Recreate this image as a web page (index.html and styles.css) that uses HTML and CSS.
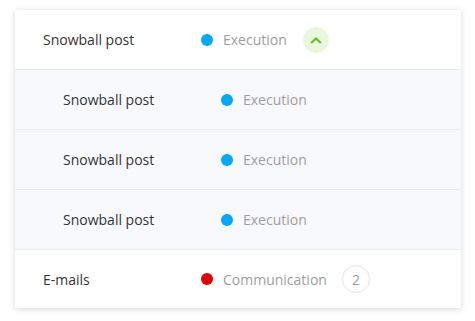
FILE: index.html
```html
<!DOCTYPE html>
<html>
<head>
<meta charset="utf-8">
<link rel="stylesheet" href="styles.css">
</head>
<body>
<div class="card">
  <div class="row">
    <span class="name">Snowball post</span>
    <span class="status"><span class="dot blue"></span><span class="label">Execution</span></span>
    <span class="toggle"><svg width="12" height="8" viewBox="0 0 12 8"><path d="M2 6.2 L6 2.4 L10 6.2" fill="none" stroke="#5cc61c" stroke-width="2.2" stroke-linecap="square"/></svg></span>
  </div>
  <div class="row child">
    <span class="name">Snowball post</span>
    <span class="status"><span class="dot blue"></span><span class="label">Execution</span></span>
  </div>
  <div class="row child">
    <span class="name">Snowball post</span>
    <span class="status"><span class="dot blue"></span><span class="label">Execution</span></span>
  </div>
  <div class="row child">
    <span class="name">Snowball post</span>
    <span class="status"><span class="dot blue"></span><span class="label">Execution</span></span>
  </div>
  <div class="row last">
    <span class="name">E-mails</span>
    <span class="status"><span class="dot red"></span><span class="label">Communication</span></span>
    <span class="count">2</span>
  </div>
</div>
</body>
</html>
```

FILE: styles.css
```css
html, body {
  margin: 0;
  background: #ffffff;
}
body {
  padding: 10px 14px 12px 15px;
  font-family: "Open Sans", "Noto Sans", sans-serif;
  font-size: 14px;
}
.card {
  width: 446px;
  background: #ffffff;
  box-shadow: 0 1px 6px rgba(0, 0, 0, 0.16);
}
.row {
  display: flex;
  align-items: center;
  height: 59px;
  padding-left: 28px;
  border-bottom: 1px solid #e9ebee;
  box-sizing: content-box;
}
.row.last {
  border-bottom: none;
  height: 58px;
}
.row.child {
  background: #f8f9fb;
  padding-left: 48px;
}
.name {
  width: 158px;
  color: #333333;
}
.status {
  display: flex;
  align-items: center;
}
.dot {
  width: 12px;
  height: 12px;
  border-radius: 50%;
  margin-right: 10px;
}
.dot.blue { background: #03a9f4; }
.dot.red { background: #e00000; }
.label {
  color: #9e9e9e;
}
.toggle {
  width: 26px;
  height: 26px;
  border-radius: 50%;
  background: #e9f7de;
  margin-left: 16px;
  display: flex;
  align-items: center;
  justify-content: center;
}
.count {
  width: 26px;
  height: 26px;
  border-radius: 50%;
  border: 1px solid #e3e3e3;
  margin-left: 15px;
  display: flex;
  align-items: center;
  justify-content: center;
  color: #9e9e9e;
  font-size: 14px;
}
```
